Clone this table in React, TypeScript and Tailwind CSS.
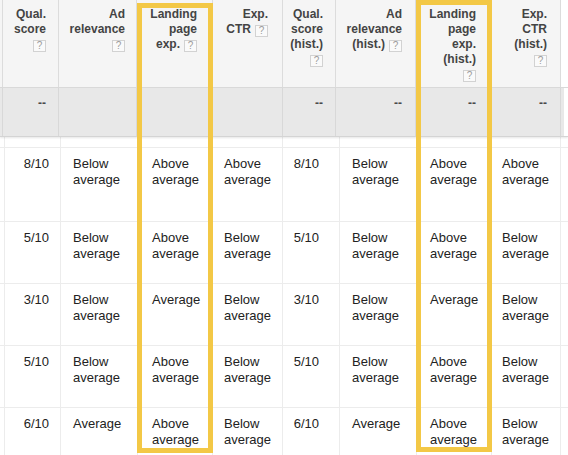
import React from "react";

type Head = {
    lines: string[];
    help: "own" | "inline";
    pr: string;
};

const heads: Head[] = [
    { lines: ["Qual.", "score"], help: "own", pr: "pr-3" },
    { lines: ["Ad", "relevance"], help: "own", pr: "pr-[11px]" },
    { lines: ["Landing", "page", "exp."], help: "inline", pr: "pr-[15px]" },
    { lines: ["Exp.", "CTR"], help: "inline", pr: "pr-[14px]" },
    { lines: ["Qual.", "score", "(hist.)"], help: "own", pr: "pr-3" },
    { lines: ["Ad", "relevance", "(hist.)"], help: "inline", pr: "pr-[13px]" },
    { lines: ["Landing", "page", "exp.", "(hist.)"], help: "own", pr: "pr-[15px]" },
    { lines: ["Exp.", "CTR", "(hist.)"], help: "own", pr: "pr-[13px]" },
];

// which columns show "--" in the totals row
const summary = [true, false, false, false, true, true, true, true];

const rows = [
    ["8/10", "Below average", "Above average", "Above average", "8/10", "Below average", "Above average", "Above average"],
    ["5/10", "Below average", "Above average", "Below average", "5/10", "Below average", "Above average", "Below average"],
    ["3/10", "Below average", "Average", "Below average", "3/10", "Below average", "Average", "Below average"],
    ["5/10", "Below average", "Above average", "Below average", "5/10", "Below average", "Above average", "Below average"],
    ["6/10", "Average", "Above average", "Below average", "6/10", "Average", "Above average", "Below average"],
];

const bodyCell = [
    "text-right pr-[11px]",
    "pl-3",
    "pl-[14px]",
    "pl-[11px]",
    "text-right pr-5",
    "pl-3",
    "pl-[13px]",
    "pl-[10px]",
];

const Help = ({ inline }: { inline?: boolean }) => (
    <span
        className={`inline-flex h-[12px] w-[13px] items-center justify-center border border-[#d2d2d2] bg-[#fafafa] text-[10px] leading-none font-normal text-[#9c9c9c] align-[-1px] ${inline ? "ml-[4px]" : ""}`}
    >
        ?
    </span>
);

const headCols = "grid grid-cols-[3px_56px_78px_76px_70px_53px_80px_76px_69px_7px]";
const bodyCols = "grid grid-cols-[5px_56px_77px_75px_70px_57px_77px_75px_69px_7px]";

export default function App() {
    return (
        <div className="relative h-[455px] w-[568px] overflow-hidden bg-white font-['Liberation_Sans',Arial,sans-serif]">
            {/* header */}
            <div className={`${headCols} h-[88px] border-b border-[#dadada]`}>
                <div className="border-r border-[#dcdcdc] bg-[#f5f5f5]" />
                {heads.map((h, i) => (
                    <div
                        key={i}
                        className={`border-r border-[#dcdcdc] bg-[#f5f5f5] pt-[7px] text-right text-[12px] leading-[15px] font-bold text-[#444] ${h.pr}`}
                    >
                        {h.lines.map((l, j) => (
                            <div key={j} className="whitespace-nowrap">
                                {l}
                                {h.help === "inline" && j === h.lines.length - 1 && <Help inline />}
                            </div>
                        ))}
                        {h.help === "own" && (
                            <div>
                                <Help />
                            </div>
                        )}
                    </div>
                ))}
                <div />
            </div>

            {/* totals row */}
            <div className={`${headCols} relative z-10 h-[49px] border-b border-[#d4d4d4] shadow-[0_1px_2px_rgba(0,0,0,0.10)]`}>
                <div className="border-r border-[#d8d8d8] bg-[#e8e8e8]" />
                {heads.map((h, i) => (
                    <div
                        key={i}
                        className={`border-r border-[#d8d8d8] bg-[#e8e8e8] pt-[8px] text-right text-[12px] leading-[15px] font-bold text-[#4a4a4a] ${h.pr}`}
                    >
                        {summary[i] ? "--" : ""}
                    </div>
                ))}
                <div className="flex">
                    <div className="w-[3px] bg-[#e8e8e8]" />
                </div>
            </div>

            {/* body */}
            <div className={`${bodyCols} h-[11px] border-b border-[#ececec]`}>
                {Array.from({ length: 9 }).map((_, i) => (
                    <div key={i} className="border-r border-[#ececec]" />
                ))}
                <div />
            </div>
            {rows.map((r, ri) => (
                <div
                    key={ri}
                    className={`${bodyCols} ${ri === 0 ? "h-[74px]" : "h-[62px]"} border-b border-[#ececec]`}
                >
                    <div className="border-r border-[#ececec]" />
                    {r.map((c, ci) => (
                        <div
                            key={ci}
                            className={`border-r border-[#ececec] pt-2 text-[13px] leading-[16px] text-[#222] ${bodyCell[ci]}`}
                        >
                            {c}
                        </div>
                    ))}
                    <div />
                </div>
            ))}

            {/* highlight boxes */}
            <div className="pointer-events-none absolute left-[137px] top-[3px] z-20 h-[450px] w-[76px] border-[5px] border-[#f3c846]" />
            <div className="pointer-events-none absolute left-[416px] top-0 z-20 h-[452px] w-[76px] border-[5px] border-[#f3c846]" />
        </div>
    );
}
